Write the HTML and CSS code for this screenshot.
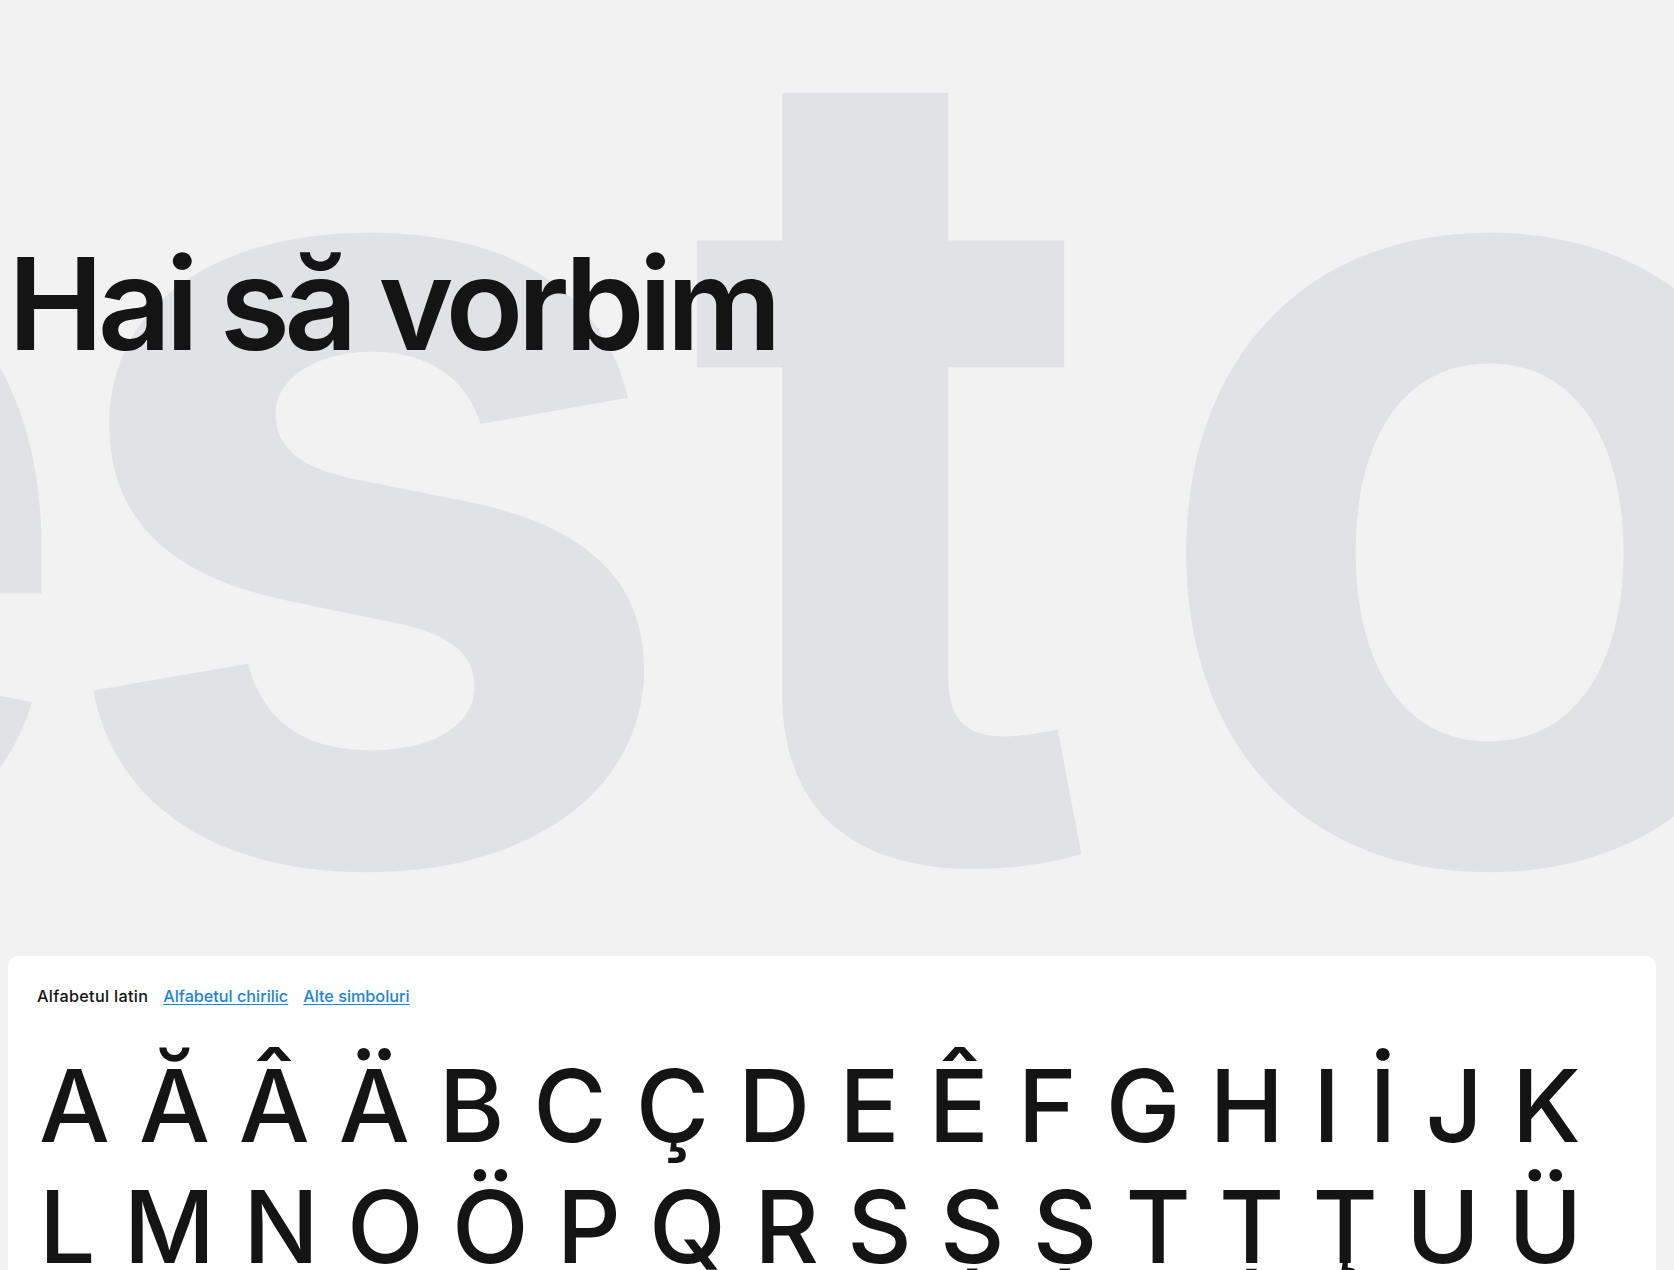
FILE: index.html
```html
<!DOCTYPE html>
<html lang="ro">
<head>
<meta charset="utf-8">
<title>Hai să vorbim</title>
<link rel="stylesheet" href="styles.css">
</head>
<body>
<div class="page">
  <header class="hero">
    <div class="hero-bg" aria-hidden="true"><span class="bg-e">e</span><span class="bg-s">s</span><span class="bg-t">t</span><span class="bg-o">o</span></div>
    <h1 class="hero-title">Hai să vorbim</h1>
  </header>
  <section class="card">
    <nav class="tabs">
      <span class="tab tab-active">Alfabetul latin</span>
      <a class="tab" href="#">Alfabetul chirilic</a>
      <a class="tab" href="#">Alte simboluri</a>
    </nav>
    <div class="glyphs">
      <div class="glyph-row">
        <span>A</span><span>Ă</span><span>Â</span><span>Ä</span><span>B</span><span>C</span><span>Ç</span><span>D</span><span>E</span><span>Ê</span><span>F</span><span>G</span><span>H</span><span>I</span><span>İ</span><span>J</span><span>K</span>
      </div>
      <div class="glyph-row glyph-row-tight">
        <span>L</span><span>M</span><span>N</span><span>O</span><span>Ö</span><span>P</span><span>Q</span><span>R</span><span>S</span><span>Ș</span><span>Ş</span><span>T</span><span>Ț</span><span>Ţ</span><span>U</span><span>Ü</span>
      </div>
    </div>
  </section>
</div>
</body>
</html>
```
FILE: styles.css
```css
html, body {
  margin: 0;
  padding: 0;
}
body {
  background: #f2f2f2;
  font-family: Inter, "Noto Sans", sans-serif;
  color: #141414;
  overflow: hidden;
}
.page {
  padding: 0 18px 0 8px;
  position: relative;
}
.hero {
  height: 956px;
  position: relative;
  margin: 0 -18px 0 -8px;
}
.hero-bg {
  position: absolute;
  left: -592px;
  top: -120px;
  font-size: 1135px;
  line-height: 1;
  font-weight: 700;
  letter-spacing: -0.03em;
  color: #e1e2e6;
  white-space: nowrap;
  user-select: none;
}
.bg-t {
  margin-left: 34px;
}
.bg-o {
  margin-left: 74px;
}
.hero-title {
  position: relative;
  margin: 0;
  padding-top: 240px;
  padding-left: 8px;
  font-size: 128px;
  line-height: 1;
  font-weight: 600;
  letter-spacing: -0.045em;
  color: #141414;
}
.card {
  background: #ffffff;
  border-radius: 10px 10px 0 0;
  padding: 30px 29px 0;
  min-height: 400px;
}
.tabs {
  display: flex;
  gap: 15px;
  font-size: 16.2px;
  line-height: 20px;
  font-weight: 500;
}
.tab {
  color: #1c84d8;
  text-decoration: underline;
  text-underline-offset: 2px;
}
.tab-active {
  color: #141414;
  text-decoration: none;
  letter-spacing: 0.02em;
}
.glyphs {
  margin-top: 39px;
}
.glyph-row {
  display: flex;
  gap: 29px;
  font-size: 100px;
  line-height: 121px;
  font-weight: 500;
  padding-left: 2px;
}
.glyph-row-tight {
  gap: 28.2px;
}
```
